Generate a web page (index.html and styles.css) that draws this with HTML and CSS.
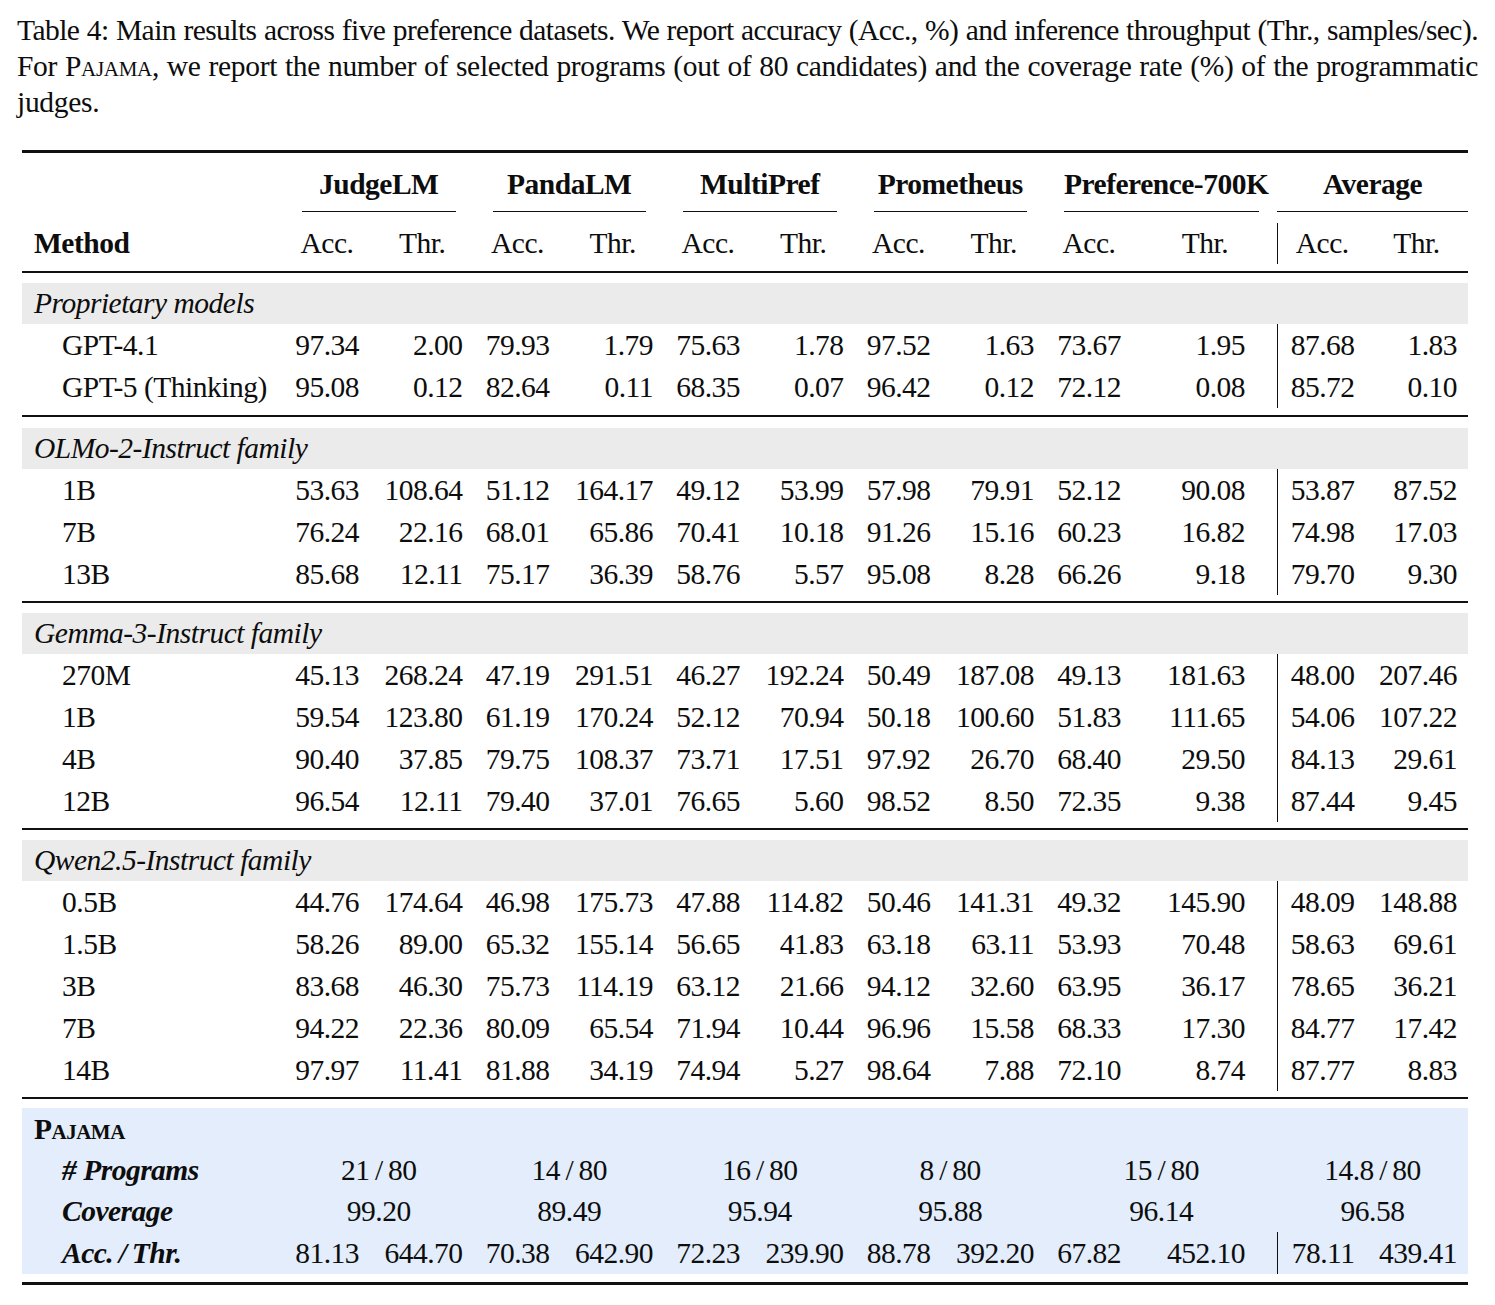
FILE: index.html
```html
<!DOCTYPE html>
<html lang="en">
<head>
<meta charset="utf-8">
<title>Table 4</title>
<link rel="stylesheet" href="styles.css">
</head>
<body>
<div class="caption">
  <div class="ln l1">Table 4: Main results across five preference datasets. We report accuracy (Acc., %) and inference throughput (Thr., samples/sec).</div>
  <div class="ln l2">For <span class="sc">Pajama</span>, we report the number of selected programs (out of 80 candidates) and the coverage rate (%) of the programmatic</div>
  <div class="ln last">judges.</div>
</div>

<table class="results">
  <colgroup>
    <col class="c-method">
    <col class="c-acc"><col class="c-thr">
    <col class="c-acc"><col class="c-thr">
    <col class="c-acc"><col class="c-thr">
    <col class="c-acc"><col class="c-thr">
    <col class="c-acc"><col class="c-thr-wide">
    <col class="c-avg-acc"><col class="c-avg-thr">
  </colgroup>
  <thead>
    <tr class="rule thick"><td colspan="13"></td></tr>
    <tr class="h1">
      <th></th>
      <th colspan="2"><div class="grp">JudgeLM</div></th>
      <th colspan="2"><div class="grp">PandaLM</div></th>
      <th colspan="2"><div class="grp">MultiPref</div></th>
      <th colspan="2"><div class="grp">Prometheus</div></th>
      <th colspan="2"><div class="grp">Preference-700K</div></th>
      <th colspan="2" class="avg-grp"><div class="grp">Average</div></th>
    </tr>
    <tr class="h2">
      <th class="method">Method</th>
      <th>Acc.</th><th>Thr.</th>
      <th>Acc.</th><th>Thr.</th>
      <th>Acc.</th><th>Thr.</th>
      <th>Acc.</th><th>Thr.</th>
      <th>Acc.</th><th>Thr.</th>
      <th>Acc.</th><th>Thr.</th>
    </tr>
  </thead>
  <tbody>
    <tr class="rule"><td colspan="13"></td></tr>
    <tr class="gap g10"><td colspan="13"></td></tr>
    <tr class="band"><td colspan="13">Proprietary models</td></tr>
    <tr class="row"><td>GPT-4.1</td><td>97.34</td><td>2.00</td><td>79.93</td><td>1.79</td><td>75.63</td><td>1.78</td><td>97.52</td><td>1.63</td><td>73.67</td><td>1.95</td><td>87.68</td><td>1.83</td></tr>
    <tr class="row"><td>GPT-5 (Thinking)</td><td>95.08</td><td>0.12</td><td>82.64</td><td>0.11</td><td>68.35</td><td>0.07</td><td>96.42</td><td>0.12</td><td>72.12</td><td>0.08</td><td>85.72</td><td>0.10</td></tr>
    <tr class="gap g7"><td colspan="13"></td></tr>
    <tr class="rule"><td colspan="13"></td></tr>
    <tr class="gap g11"><td colspan="13"></td></tr>
    <tr class="band"><td colspan="13">OLMo-2-Instruct family</td></tr>
    <tr class="row"><td>1B</td><td>53.63</td><td>108.64</td><td>51.12</td><td>164.17</td><td>49.12</td><td>53.99</td><td>57.98</td><td>79.91</td><td>52.12</td><td>90.08</td><td>53.87</td><td>87.52</td></tr>
    <tr class="row"><td>7B</td><td>76.24</td><td>22.16</td><td>68.01</td><td>65.86</td><td>70.41</td><td>10.18</td><td>91.26</td><td>15.16</td><td>60.23</td><td>16.82</td><td>74.98</td><td>17.03</td></tr>
    <tr class="row"><td>13B</td><td>85.68</td><td>12.11</td><td>75.17</td><td>36.39</td><td>58.76</td><td>5.57</td><td>95.08</td><td>8.28</td><td>66.26</td><td>9.18</td><td>79.70</td><td>9.30</td></tr>
    <tr class="gap g6"><td colspan="13"></td></tr>
    <tr class="rule"><td colspan="13"></td></tr>
    <tr class="gap g10"><td colspan="13"></td></tr>
    <tr class="band"><td colspan="13">Gemma-3-Instruct family</td></tr>
    <tr class="row"><td>270M</td><td>45.13</td><td>268.24</td><td>47.19</td><td>291.51</td><td>46.27</td><td>192.24</td><td>50.49</td><td>187.08</td><td>49.13</td><td>181.63</td><td>48.00</td><td>207.46</td></tr>
    <tr class="row"><td>1B</td><td>59.54</td><td>123.80</td><td>61.19</td><td>170.24</td><td>52.12</td><td>70.94</td><td>50.18</td><td>100.60</td><td>51.83</td><td>111.65</td><td>54.06</td><td>107.22</td></tr>
    <tr class="row"><td>4B</td><td>90.40</td><td>37.85</td><td>79.75</td><td>108.37</td><td>73.71</td><td>17.51</td><td>97.92</td><td>26.70</td><td>68.40</td><td>29.50</td><td>84.13</td><td>29.61</td></tr>
    <tr class="row"><td>12B</td><td>96.54</td><td>12.11</td><td>79.40</td><td>37.01</td><td>76.65</td><td>5.60</td><td>98.52</td><td>8.50</td><td>72.35</td><td>9.38</td><td>87.44</td><td>9.45</td></tr>
    <tr class="gap g6"><td colspan="13"></td></tr>
    <tr class="rule"><td colspan="13"></td></tr>
    <tr class="gap g10"><td colspan="13"></td></tr>
    <tr class="band"><td colspan="13">Qwen2.5-Instruct family</td></tr>
    <tr class="row"><td>0.5B</td><td>44.76</td><td>174.64</td><td>46.98</td><td>175.73</td><td>47.88</td><td>114.82</td><td>50.46</td><td>141.31</td><td>49.32</td><td>145.90</td><td>48.09</td><td>148.88</td></tr>
    <tr class="row"><td>1.5B</td><td>58.26</td><td>89.00</td><td>65.32</td><td>155.14</td><td>56.65</td><td>41.83</td><td>63.18</td><td>63.11</td><td>53.93</td><td>70.48</td><td>58.63</td><td>69.61</td></tr>
    <tr class="row"><td>3B</td><td>83.68</td><td>46.30</td><td>75.73</td><td>114.19</td><td>63.12</td><td>21.66</td><td>94.12</td><td>32.60</td><td>63.95</td><td>36.17</td><td>78.65</td><td>36.21</td></tr>
    <tr class="row"><td>7B</td><td>94.22</td><td>22.36</td><td>80.09</td><td>65.54</td><td>71.94</td><td>10.44</td><td>96.96</td><td>15.58</td><td>68.33</td><td>17.30</td><td>84.77</td><td>17.42</td></tr>
    <tr class="row"><td>14B</td><td>97.97</td><td>11.41</td><td>81.88</td><td>34.19</td><td>74.94</td><td>5.27</td><td>98.64</td><td>7.88</td><td>72.10</td><td>8.74</td><td>87.77</td><td>8.83</td></tr>
    <tr class="gap g6"><td colspan="13"></td></tr>
    <tr class="rule"><td colspan="13"></td></tr>
    <tr class="gap g9"><td colspan="13"></td></tr>
    <tr class="pj pj-title"><td colspan="13"><span class="sc">Pajama</span></td></tr>
    <tr class="pj pj-span"><td># Programs</td><td colspan="2">21&thinsp;/&thinsp;80</td><td colspan="2">14&thinsp;/&thinsp;80</td><td colspan="2">16&thinsp;/&thinsp;80</td><td colspan="2">8&thinsp;/&thinsp;80</td><td colspan="2">15&thinsp;/&thinsp;80</td><td colspan="2">14.8&thinsp;/&thinsp;80</td></tr>
    <tr class="pj pj-span"><td>Coverage</td><td colspan="2">99.20</td><td colspan="2">89.49</td><td colspan="2">95.94</td><td colspan="2">95.88</td><td colspan="2">96.14</td><td colspan="2">96.58</td></tr>
    <tr class="pj row pj-last"><td>Acc.&thinsp;/&thinsp;Thr.</td><td>81.13</td><td>644.70</td><td>70.38</td><td>642.90</td><td>72.23</td><td>239.90</td><td>88.78</td><td>392.20</td><td>67.82</td><td>452.10</td><td>78.11</td><td>439.41</td></tr>
    <tr class="gap g8"><td colspan="13"></td></tr>
    <tr class="rule thick"><td colspan="13"></td></tr>
  </tbody>
</table>
</body>
</html>
```

FILE: styles.css
```css
html, body {
  margin: 0;
  padding: 0;
  background: #ffffff;
}

body {
  color: #0d0d0d;
  font-family: "Liberation Serif", "Times New Roman", serif;
}

.sc {
  font-variant: small-caps;
}

/* ---------- caption ---------- */
.caption {
  margin: 12px 0 0 17px;
  width: 1461px;
  font-size: 29.5px;
  line-height: 36px;
}

.caption .ln {
  white-space: nowrap;
  text-align: justify;
  text-align-last: justify;
}

.caption .l1 {
  letter-spacing: -0.55px;
  word-spacing: -0.5px;
}

.caption .l2 {
  letter-spacing: -0.3px;
}

.caption .ln.last {
  letter-spacing: -0.3px;
  text-align: left;
  text-align-last: left;
}

/* ---------- table ---------- */
.results {
  margin: 30px 0 0 22px;
  width: 1446px;
  table-layout: fixed;
  border-collapse: separate;
  border-spacing: 0;
  font-size: 29.5px;
  letter-spacing: -0.5px;
  line-height: 36px;
}

.c-method  { width: 261.5px; }
.c-acc     { width: 87px; }
.c-thr     { width: 103.5px; }
.c-thr-wide{ width: 144.5px; }
.c-avg-acc { width: 87.5px; }
.c-avg-thr { width: 103.5px; }

.results th,
.results td {
  padding: 0 11.5px;
  white-space: nowrap;
}

/* rules and spacing rows */
.rule td {
  height: 2px;
  padding: 0;
  font-size: 0;
  line-height: 0;
  background: #111111;
}

.rule.thick td {
  height: 3px;
}

.gap td {
  padding: 0;
  font-size: 0;
  line-height: 0;
}
.g6 td  { height: 6px; }
.g7 td  { height: 7px; }
.g8 td  { height: 8px; }
.g9 td  { height: 9px; }
.g10 td { height: 10px; }
.g11 td { height: 11px; }

/* header row 1 */
.h1 th {
  padding: 13px 11.5px 0;
  vertical-align: bottom;
  font-weight: bold;
  text-align: center;
}

.h1 .grp {
  margin: 0 7px;
  padding-bottom: 9px;
  border-bottom: 1.5px solid #111111;
}

.h1 .avg-grp {
  padding-left: 0;
  padding-right: 0;
}

.h1 .avg-grp .grp {
  margin: 0;
}

/* header row 2 */
.h2 th {
  padding-top: 12.5px;
  padding-bottom: 10px;
  font-weight: normal;
  text-align: center;
}

.h2 th.method {
  font-weight: bold;
  text-align: left;
  padding-left: 12px;
}

.h2 th:nth-child(11) {
  padding-left: 32.5px;
  padding-right: 32px;
}

.h2 th:nth-child(12) {
  padding-left: 13px;
  padding-right: 10px;
  background: linear-gradient(#111111, #111111) 0 10.5px / 1.4px 41px no-repeat;
}

.h2 th:nth-child(13) {
  padding-right: 11px;
}

/* group bands */
.band td {
  height: 41px;
  padding: 0 0 0 12px;
  background: #ebebeb;
  font-style: italic;
  text-align: left;
}

/* data rows */
.row td {
  height: 42px;
  text-align: right;
}

.row td:first-child {
  text-align: left;
  padding-left: 40px;
}

.row td:nth-child(11) {
  padding-left: 32.5px;
  padding-right: 32px;
}

.row td:nth-child(12) {
  padding-left: 13px;
  padding-right: 10px;
  background: linear-gradient(#111111, #111111) 0 0 / 1.4px 100% no-repeat;
}

.row td:nth-child(13) {
  padding-right: 11px;
}

/* Pajama block */
.pj td {
  background: #e3edfb;
}

.pj-title td {
  height: 42px;
  padding-left: 12px;
  font-weight: bold;
  text-align: left;
}

.pj-span td {
  height: 41px;
  text-align: center;
}

.pj-span td:first-child,
.pj-last td:first-child {
  text-align: left;
  padding-left: 40px;
  font-weight: bold;
  font-style: italic;
}

.pj-last td:nth-child(12) {
  background: linear-gradient(#111111, #111111) 0 0 / 1.4px 100% no-repeat, #e3edfb;
}
```
